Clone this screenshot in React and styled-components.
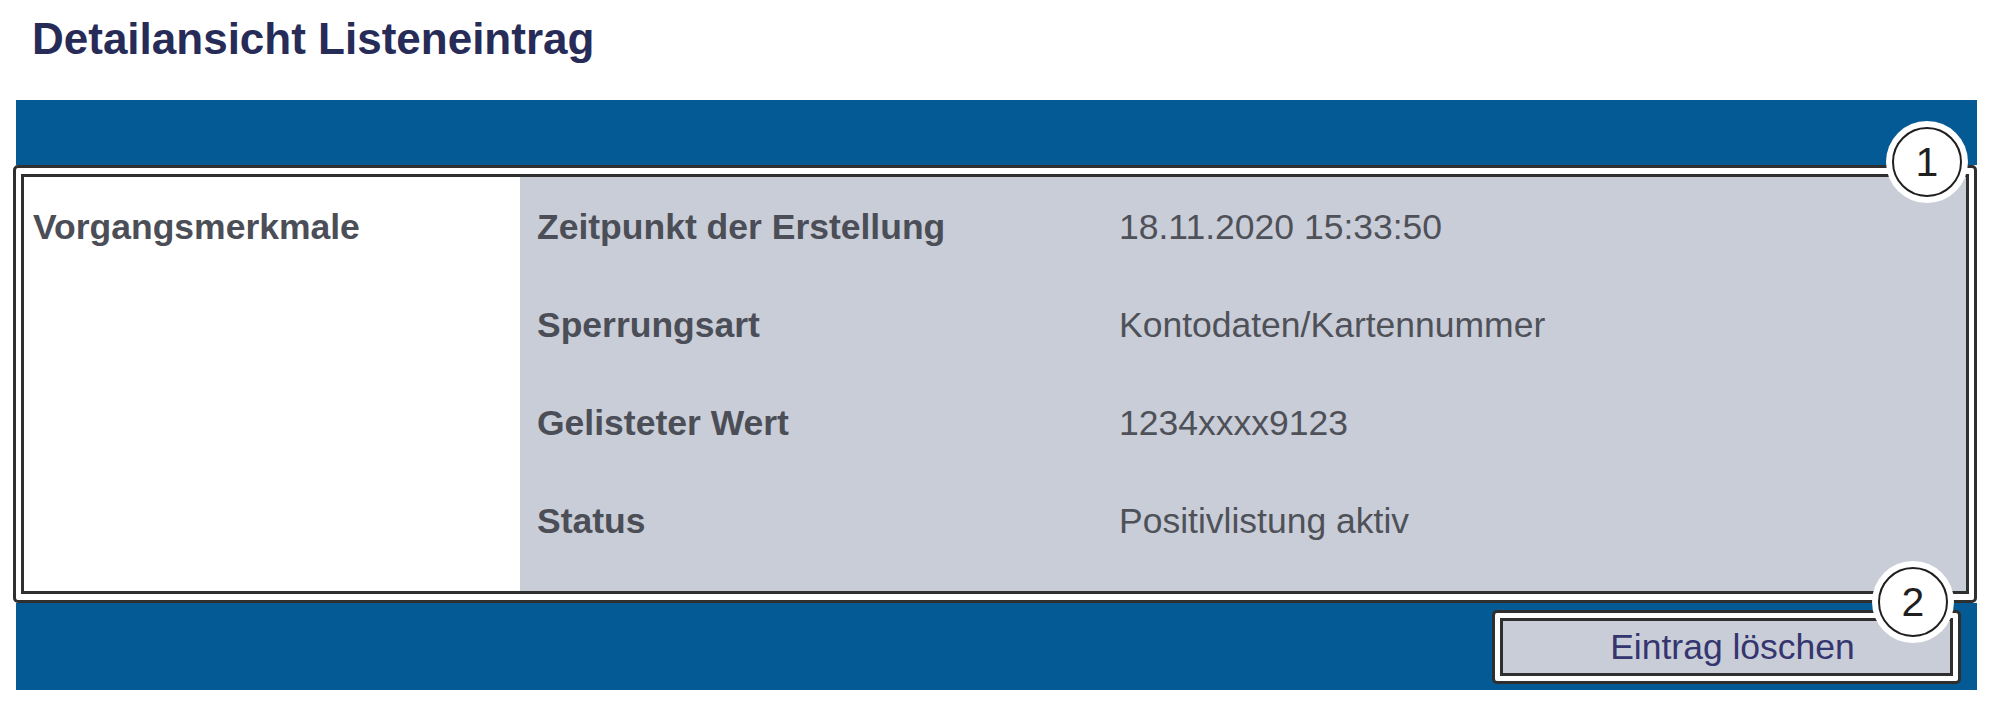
import React from "react";
import styled, { createGlobalStyle } from "styled-components";

const Global = createGlobalStyle`
  html, body { margin: 0; padding: 0; background: #ffffff; }
  body { font-family: "Liberation Sans", Arial, sans-serif; }
`;

const Page = styled.div`
  width: 1993px;
  height: 703px;
  box-sizing: border-box;
  padding: 14px 16px 0 16px;
  background: #ffffff;
`;

const Title = styled.h1`
  margin: 0 0 36px 16px;
  font-family: "Liberation Sans", Arial, sans-serif;
  font-weight: 700;
  font-size: 44px;
  line-height: 50px;
  color: #272b57;
`;

const Panel = styled.div`
  width: 1961px;
  display: flex;
  flex-direction: column;
`;

const BlueBar = styled.div`
  background: #035a94;
  height: ${(p) => p.$h}px;
  box-sizing: border-box;
  display: flex;
  justify-content: flex-end;
  align-items: flex-start;
  padding: ${(p) => p.$pad || "0"};
`;

const Frame = styled.div`
  position: relative;
  margin-left: -3px;
  width: 1964px;
  box-sizing: border-box;
  border: 3px solid #2f2f2f;
  border-radius: 5px;
  background: #ffffff;
  padding: 6px 5px;
`;

const Table = styled.div`
  border: 3px solid #2f2f2f;
  display: grid;
  grid-template-columns: 496px 1fr;
  height: 414px;
`;

const SectionCell = styled.div`
  background: #ffffff;
  padding: 30px 0 0 9px;
  font-weight: 700;
  font-size: 35.5px;
  line-height: 40px;
  color: #4b4e56;
`;

const DataCell = styled.div`
  background: #c9cdd8;
  padding-left: 17px;
  display: flex;
  flex-direction: column;
`;

const Row = styled.div`
  height: 98px;
  box-sizing: border-box;
  padding-top: 30px;
  display: grid;
  grid-template-columns: 582px 1fr;
  font-size: 35.5px;
  line-height: 40px;
`;

const Label = styled.div`
  font-weight: 700;
  color: #4b4e56;
`;

const Value = styled.div`
  font-weight: 400;
  color: #4f5158;
`;

const ButtonFrame = styled.div`
  position: relative;
  width: 469px;
  height: 74px;
  box-sizing: border-box;
  border: 3px solid #2f2f2f;
  border-radius: 5px;
  background: #ffffff;
  padding: 5px;
`;

const Button = styled.button`
  width: 100%;
  height: 100%;
  box-sizing: border-box;
  border: 3px solid #2f2f2f;
  background: #c9cdd8;
  margin: 0;
  padding: 0 0 0 12px;
  font-family: "Liberation Sans", Arial, sans-serif;
  font-size: 35.5px;
  line-height: 46px;
  color: #35356f;
  cursor: pointer;
`;

const Marker = styled.div`
  position: absolute;
  left: ${(p) => p.$x}px;
  top: ${(p) => p.$y}px;
  width: 70px;
  height: 70px;
  box-sizing: border-box;
  border: 2.5px solid #1f1f1f;
  border-radius: 50%;
  background: #ffffff;
  box-shadow: 0 0 0 6px #ffffff;
  display: flex;
  align-items: center;
  justify-content: center;
  font-family: "Liberation Sans", Arial, sans-serif;
  font-size: 41px;
  line-height: 1;
  color: #1f1f1f;
`;

const rows = [
  ["Zeitpunkt der Erstellung", "18.11.2020 15:33:50"],
  ["Sperrungsart", "Kontodaten/Kartennummer"],
  ["Gelisteter Wert", "1234xxxx9123"],
  ["Status", "Positivlistung aktiv"],
];

export default function App() {
  return (
    <>
      <Global />
      <Page>
        <Title>Detailansicht Listeneintrag</Title>
        <Panel>
          <BlueBar $h={65} />
          <Frame>
            <Table>
              <SectionCell>Vorgangsmerkmale</SectionCell>
              <DataCell>
                {rows.map(([l, v]) => (
                  <Row key={l}>
                    <Label>{l}</Label>
                    <Value>{v}</Value>
                  </Row>
                ))}
              </DataCell>
            </Table>
            <Marker $x={1876} $y={-41}>1</Marker>
          </Frame>
          <BlueBar $h={87} $pad="7px 16px 0 0">
            <ButtonFrame>
              <Button type="button">Eintrag löschen</Button>
              <Marker $x={383} $y={-46}>2</Marker>
            </ButtonFrame>
          </BlueBar>
        </Panel>
      </Page>
    </>
  );
}
